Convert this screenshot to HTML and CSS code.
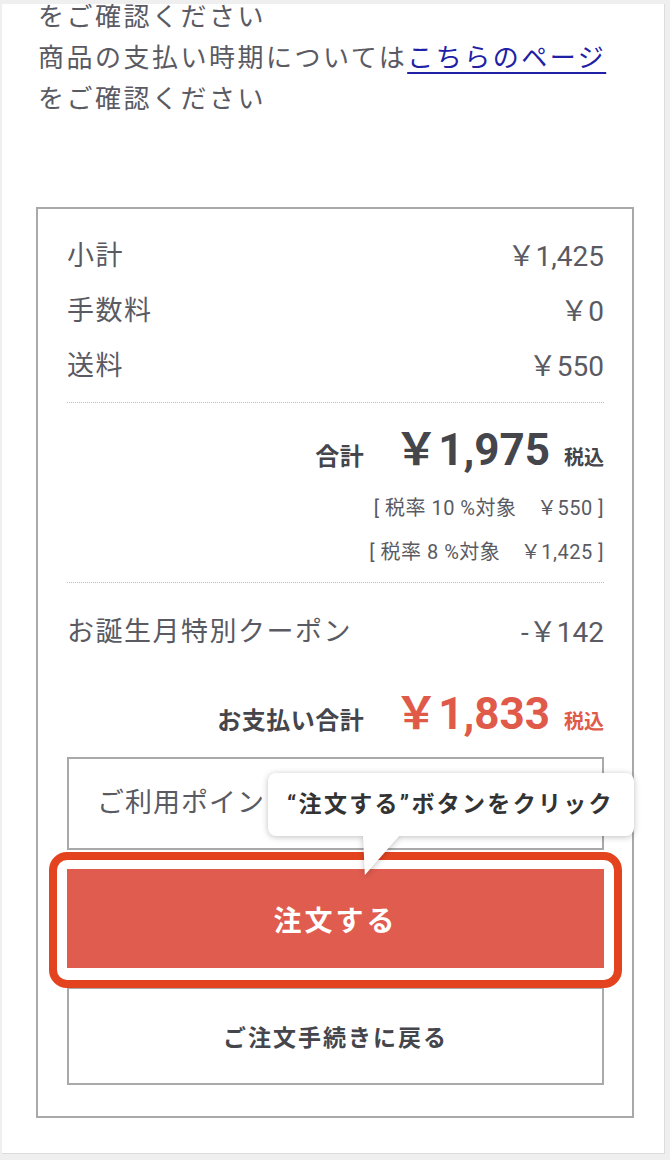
FILE: index.html
```html
<!DOCTYPE html>
<html lang="ja">
<head>
    <meta charset="UTF-8">
    <meta name="viewport" content="width=device-width, initial-scale=1.0">
    <title>ご注文内容の確認</title>
    <link rel="stylesheet" href="styles.css">
</head>
<body>
    <div class="page">
        <p class="notice">
            をご確認ください<br>
            商品の支払い時期については<a href="#">こちらのページ</a><br>
            をご確認ください
        </p>

        <div class="summary">
            <div class="fees">
                <div class="row"><span>小計</span><span class="num">￥1,425</span></div>
                <div class="row"><span>手数料</span><span class="num">￥0</span></div>
                <div class="row"><span>送料</span><span class="num">￥550</span></div>
            </div>

            <div class="total-block">
                <div class="total">
                    <span class="total-label">合計</span>
                    <span class="total-price">￥1,975</span>
                    <span class="tax-in">税込</span>
                </div>
                <div class="tax-line first">[ 税率 10 %対象　￥550 ]</div>
                <div class="tax-line">[ 税率 8 %対象　￥1,425 ]</div>
            </div>

            <div class="row coupon"><span>お誕生月特別クーポン</span><span class="num">-￥142</span></div>

            <div class="total pay">
                <span class="total-label">お支払い合計</span>
                <span class="total-price">￥1,833</span>
                <span class="tax-in">税込</span>
            </div>

            <div class="order-area">
                <div class="points">ご利用ポイント</div>
                <button class="order-button">注文する</button>
                <button class="back-button">ご注文手続きに戻る</button>

                <div class="highlight"></div>
                <div class="tooltip">“注文する”ボタンをクリック</div>
            </div>
        </div>
    </div>
</body>
</html>
```

FILE: styles.css
```css
body {
    margin: 0;
    background-color: #efefef;
    font-family: Roboto, "Noto Sans CJK JP", sans-serif;
    color: #5a5a63;
}
.page {
    margin: 4px 5px 0 2px;
    height: 1150px;
    overflow: hidden;
    background: white;
    border-right: 1px solid #dcdcdc;
    border-bottom: 1px solid #dcdcdc;
    box-sizing: border-box;
}
.notice {
    margin: -10px 0 0 36px;
    font-family: "Noto Sans CJK JP", sans-serif;
    font-size: 26px;
    line-height: 41px;
    letter-spacing: 2.5px;
}
.notice a {
    color: #2020a6;
    text-decoration: underline;
    text-underline-offset: 5px;
    text-decoration-thickness: 2px;
}
.summary {
    margin: 90px 0 0 34px;
    width: 598px;
    border: 2px solid #a9a9a9;
    padding: 20px 28px 31px 29px;
    box-sizing: border-box;
}
.row {
    display: flex;
    justify-content: space-between;
    height: 55px;
    line-height: 55px;
    font-size: 27px;
    letter-spacing: 1.5px;
}
.row .num {
    font-size: 28px;
    letter-spacing: 0;
}
.fees {
    padding-bottom: 8px;
    border-bottom: 1px dotted #bdbdbd;
}
.total-block {
    padding: 20px 0 8px;
    border-bottom: 1px dotted #bdbdbd;
}
.total {
    display: flex;
    justify-content: flex-end;
    align-items: baseline;
    height: 54px;
    line-height: 54px;
    color: #45454c;
    font-weight: bold;
}
.total-label {
    font-family: "Noto Sans CJK JP", sans-serif;
    font-size: 24px;
    letter-spacing: 0.5px;
    margin-right: 30px;
}
.total-price {
    font-size: 44px;
    margin-right: 14px;
}
.tax-in {
    font-family: "Noto Sans CJK JP", sans-serif;
    font-size: 20px;
}
.tax-line {
    text-align: right;
    font-size: 20px;
    letter-spacing: 0.5px;
    line-height: 44px;
}
.tax-line.first {
    margin-top: 9px;
}
.coupon {
    margin-top: 22px;
}
.pay {
    margin-top: 27px;
}
.pay .total-price, .pay .tax-in {
    color: #e05a49;
}
.order-area {
    position: relative;
    margin-top: 16px;
}
.points {
    height: 93px;
    line-height: 89px;
    border: 2px solid #a9a9a9;
    box-sizing: border-box;
    padding-left: 28px;
    font-size: 27px;
    letter-spacing: 1px;
    margin-bottom: 19px;
}
.order-button, .back-button {
    display: block;
    width: 100%;
    font-family: "Noto Sans CJK JP", sans-serif;
    font-weight: bold;
    cursor: pointer;
}
.order-button {
    height: 99px;
    border: none;
    background-color: #df5c4f;
    color: white;
    font-size: 28px;
    letter-spacing: 3px;
    margin-bottom: 19px;
}
.back-button {
    height: 98px;
    border: 2px solid #a9a9a9;
    background: white;
    color: #45454c;
    font-size: 23px;
    letter-spacing: 2px;
}
.highlight {
    position: absolute;
    left: -18px;
    top: 95px;
    width: 573px;
    height: 136px;
    border: 8px solid #e3441f;
    border-radius: 18px;
    box-sizing: border-box;
}
.tooltip {
    position: absolute;
    left: 201px;
    top: 16px;
    width: 366px;
    height: 63px;
    box-sizing: border-box;
    padding-left: 19px;
    line-height: 63px;
    background: white;
    border-radius: 8px;
    font-family: Roboto, "Noto Sans CJK JP", sans-serif;
    font-size: 23px;
    font-weight: bold;
    letter-spacing: 2.3px;
    color: #333;
    filter: drop-shadow(0 1px 3px rgba(0, 0, 0, 0.25));
}
.tooltip::after {
    content: "";
    position: absolute;
    left: 95px;
    top: 62px;
    width: 37px;
    height: 40px;
    background: white;
    clip-path: polygon(0 0, 100% 0, 5% 100%);
}
```
